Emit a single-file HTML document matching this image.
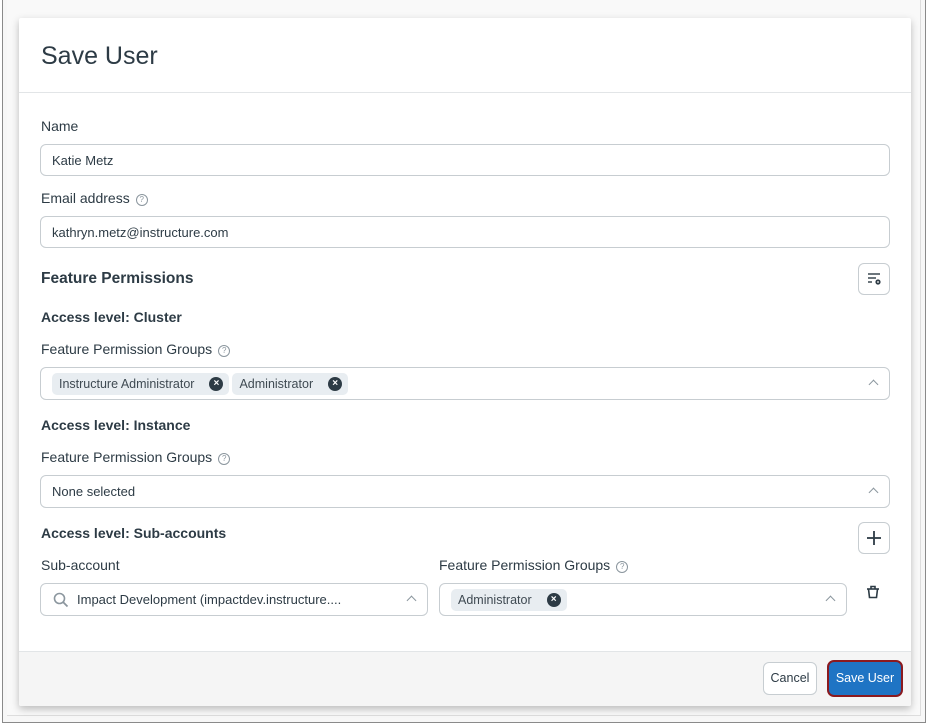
<!DOCTYPE html>
<html><head><meta charset="utf-8"><style>
*{box-sizing:border-box;margin:0;padding:0}
body{width:929px;height:726px;overflow:hidden;background:#fff;font-family:"Liberation Sans",sans-serif;color:#2d3b45;position:relative}
.frame{position:absolute;left:2px;top:0;width:924px;height:723px;border:1px solid #8a8a8a;border-top:none;background:#f7f7f7}
.inner{position:absolute;left:7px;top:0;width:914px;height:716px;background:#f9f9f9;border-right:1px solid #ddd;border-bottom:1px solid #ddd}
.modal{position:absolute;left:19px;top:18px;width:892px;height:688px;background:#fff;box-shadow:0 3px 8px rgba(0,0,0,.25);border-radius:2px;overflow:hidden}
.a{position:absolute;white-space:nowrap}
.lbl{font-size:14px;color:#2d3b45}
.b{font-weight:bold;font-size:14px}
.inp{position:absolute;border:1px solid #c7cdd1;border-radius:6px;background:#fff;font-size:13px;color:#2d3b45;padding-left:11px;display:flex;align-items:center}
.chip{display:inline-flex;align-items:center;background:#e8edf1;border-radius:5px;height:22px;padding:0 6px 0 7px;font-size:12.5px;color:#3f4a52;margin-right:3px}
.x{display:inline-block;width:14px;height:14px;border-radius:50%;background:#2d3b45;color:#fff;font-size:10px;line-height:14px;text-align:center;margin-left:15px;font-weight:bold}
.q{display:inline-block;width:12px;height:12px;border:1px solid #8b969e;border-radius:50%;font-size:8px;line-height:10px;text-align:center;color:#8b969e;margin-left:6px;vertical-align:1px}
.car{position:absolute;right:12px;top:50%;margin-top:-3px;width:7px;height:7px;border-left:1.6px solid #8b969e;border-top:1.6px solid #8b969e;transform:rotate(45deg)}
.ib{position:absolute;width:32px;height:32px;border:1px solid #c7cdd1;border-radius:6px;background:#fff}
</style></head><body>
<div class="frame"></div><div class="inner"></div>
<div class="modal">
 <div class="a" style="left:22px;top:24px;font-size:25px;color:#2d3b45">Save User</div>
 <div class="a" style="left:0;top:74px;width:892px;height:1px;background:#e2e5e7"></div>

 <div class="a lbl" style="left:22px;top:100px">Name</div>
 <div class="inp" style="left:21px;top:126px;width:850px;height:32px">Katie Metz</div>
 <div class="a lbl" style="left:22px;top:172px">Email address<span class="q">?</span></div>
 <div class="inp" style="left:21px;top:198px;width:850px;height:32px">kathryn.metz@instructure.com</div>

 <div class="a" style="left:22px;top:252px;font-size:15.5px;font-weight:bold">Feature Permissions</div>
 <div class="ib" style="left:839px;top:245px">
  <svg width="30" height="30" viewBox="0 0 30 30"><g stroke="#2d3b45" stroke-width="1.4" fill="none"><line x1="9" y1="10" x2="21" y2="10"/><line x1="9" y1="14" x2="17" y2="14"/><line x1="9" y1="18" x2="13" y2="18"/></g><circle cx="19" cy="18" r="2.6" fill="#2d3b45"/><circle cx="19" cy="18" r="0.9" fill="#fff"/></svg>
 </div>

 <div class="a b" style="left:22px;top:291px">Access level: Cluster</div>
 <div class="a lbl" style="left:22px;top:323px">Feature Permission Groups<span class="q">?</span></div>
 <div class="inp" style="left:21px;top:349px;width:850px;height:33px;padding-left:11px">
  <span class="chip">Instructure Administrator<span class="x">×</span></span><span class="chip">Administrator<span class="x">×</span></span><span class="car"></span>
 </div>

 <div class="a b" style="left:22px;top:399px">Access level: Instance</div>
 <div class="a lbl" style="left:22px;top:431px">Feature Permission Groups<span class="q">?</span></div>
 <div class="inp" style="left:21px;top:457px;width:850px;height:33px">None selected<span class="car"></span></div>

 <div class="a b" style="left:22px;top:507px">Access level: Sub-accounts</div>
 <div class="ib" style="left:839px;top:504px">
  <svg width="30" height="30" viewBox="0 0 30 30"><g stroke="#2d3b45" stroke-width="1.8"><line x1="15" y1="8" x2="15" y2="22"/><line x1="8" y1="15" x2="22" y2="15"/></g></svg>
 </div>
 <div class="a lbl" style="left:22px;top:539px">Sub-account</div>
 <div class="a lbl" style="left:420px;top:539px">Feature Permission Groups<span class="q">?</span></div>
 <div class="inp" style="left:21px;top:565px;width:388px;height:33px;padding-left:12px">
  <svg width="16" height="16" viewBox="0 0 16 16" style="margin-right:8px"><circle cx="6.5" cy="6.5" r="5" stroke="#8b969e" stroke-width="1.6" fill="none"/><line x1="10" y1="10" x2="14.5" y2="14.5" stroke="#8b969e" stroke-width="1.8"/></svg>Impact Development (impactdev.instructure....<span class="car"></span>
 </div>
 <div class="inp" style="left:420px;top:565px;width:408px;height:33px;padding-left:11px">
  <span class="chip">Administrator<span class="x">×</span></span><span class="car"></span>
 </div>
 <svg class="a" style="left:845px;top:565px" width="18" height="18" viewBox="0 0 18 18"><g stroke="#2d3b45" stroke-width="1.6" fill="none"><line x1="3" y1="6" x2="15" y2="6"/><path d="M7 6V3.5h4V6"/><path d="M4.5 6l1 8.5h7l1-8.5"/></g></svg>

 <div class="a" style="left:0;top:633px;width:892px;height:55px;background:#f5f5f5;border-top:1px solid #e2e5e7"></div>
 <div class="a" style="left:744px;top:644px;width:54px;height:33px;border:1px solid #c7cdd1;border-radius:6px;background:#fff;font-size:12.5px;text-align:center;line-height:31px">Cancel</div>
 <div class="a" style="left:808px;top:642px;width:76px;height:37px;border:2.5px solid #8b1a1f;border-radius:7px;background:#1f74c4;color:#fff;font-size:12.5px;text-align:center;line-height:32px">Save User</div>
</div>
</body></html>
